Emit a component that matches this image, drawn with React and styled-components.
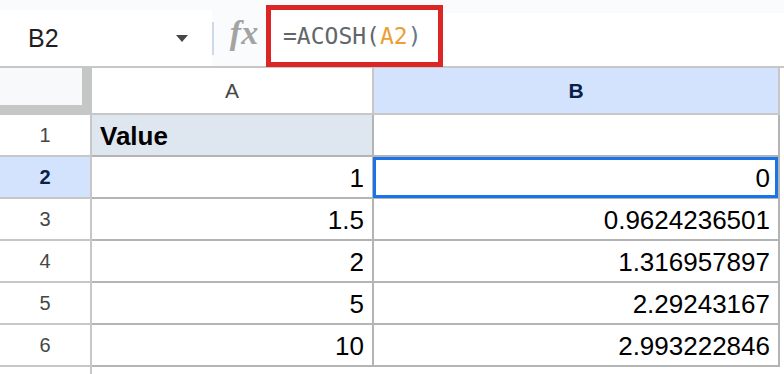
import React from 'react';
import styled, { createGlobalStyle } from 'styled-components';

const GlobalStyle = createGlobalStyle`
  body {
    margin: 0;
    background: #ffffff;
    font-family: "Liberation Sans", Arial, sans-serif;
  }
`;

const Page = styled.div`
  width: 784px;
  height: 374px;
  overflow: hidden;
`;

const TopBar = styled.div`
  display: flex;
  height: 66px;
  background: #f9fbfd;
  border-bottom: 2px solid #c7c7c7;
`;

const NameBox = styled.div`
  display: flex;
  align-items: center;
  width: 212px;
  margin-top: 10px;
  padding-left: 28px;
  box-sizing: border-box;
  background: #ffffff;
  font-size: 25px;
  color: #1f1f1f;
`;

const Caret = styled.span`
  margin-left: auto;
  margin-right: 24px;
  width: 0;
  height: 0;
  border-left: 6px solid transparent;
  border-right: 6px solid transparent;
  border-top: 7px solid #444746;
`;

const Divider = styled.div`
  width: 2px;
  height: 33px;
  margin-top: 22px;
  background: #cdd9e8;
`;

const FxBox = styled.div`
  display: flex;
  align-items: center;
  justify-content: center;
  width: 52px;
  padding-left: 8px;
  box-sizing: border-box;
  font-family: "Liberation Serif", serif;
  font-style: italic;
  font-weight: bold;
  font-size: 34px;
  color: #a3a3a3;
`;

const FormulaInput = styled.div`
  flex: 1;
  display: flex;
  margin-top: 13px;
  background: #ffffff;
`;

const Highlight = styled.div`
  position: relative;
  z-index: 2;
  display: flex;
  align-items: center;
  width: 177px;
  height: 62px;
  margin-top: -8px;
  padding-left: 12px;
  box-sizing: border-box;
  border: 5px solid #dc2626;
  background: #ffffff;
  font-family: "DejaVu Sans Mono", monospace;
  font-size: 23px;
  white-space: nowrap;
`;

const Token = styled.span`
  color: ${(p) => p.$color || '#62666b'};
`;

const Sheet = styled.div`
  display: grid;
  grid-template-columns: 92px 282px 406px;
  grid-template-rows: 47px repeat(6, 42px) 10px;
`;

const Cell = styled.div`
  box-sizing: border-box;
  border-right: 2px solid #b4b4b4;
  border-bottom: 2px solid #b4b4b4;
  display: flex;
  align-items: flex-end;
  justify-content: ${(p) => (p.$left ? 'flex-start' : 'flex-end')};
  padding: 0 8px 4px 8px;
  font-size: 26px;
  line-height: 30px;
  color: #000000;
  font-weight: ${(p) => (p.$bold ? 'bold' : 'normal')};
  background: ${(p) => p.$bg || '#ffffff'};
  position: relative;

  ${(p) =>
    p.$selected &&
    `
    &::after {
      content: '';
      position: absolute;
      top: 0;
      left: -1px;
      right: 0;
      bottom: -1px;
      border: 3px solid #1a73e8;
    }
  `}
`;

const Corner = styled.div`
  box-sizing: border-box;
  background: #f8f9fa;
  border-right: 10px solid #c4c7c5;
  border-bottom: 10px solid #c4c7c5;
`;

const ColHead = styled.div`
  box-sizing: border-box;
  display: flex;
  align-items: center;
  justify-content: center;
  border-right: 2px solid #c7c7c7;
  border-bottom: 2px solid #c7c7c7;
  font-size: 21px;
  color: ${(p) => (p.$active ? '#0b1f4b' : '#444746')};
  font-weight: ${(p) => (p.$active ? 'bold' : 'normal')};
  background: ${(p) => (p.$active ? '#d3e3fd' : '#ffffff')};
`;

const RowHead = styled.div`
  box-sizing: border-box;
  display: flex;
  align-items: center;
  justify-content: center;
  border-right: 2px solid #c7c7c7;
  border-bottom: ${(p) => (p.$last ? 'none' : '2px solid #c7c7c7')};
  font-size: 20px;
  color: ${(p) => (p.$active ? '#0b1f4b' : '#444746')};
  font-weight: ${(p) => (p.$active ? 'bold' : 'normal')};
  background: ${(p) => (p.$active ? '#d3e3fd' : '#ffffff')};
`;

const rows = [
  { a: '1', b: '0' },
  { a: '1.5', b: '0.9624236501' },
  { a: '2', b: '1.316957897' },
  { a: '5', b: '2.29243167' },
  { a: '10', b: '2.993222846' },
];

export default function App() {
  return (
    <Page>
      <GlobalStyle />
      <TopBar>
        <NameBox>
          B2
          <Caret />
        </NameBox>
        <Divider />
        <FxBox>fx</FxBox>
        <FormulaInput>
          <Highlight>
            <Token>=ACOSH(</Token>
            <Token $color="#eb9f35">A2</Token>
            <Token $color="#66778c">)</Token>
          </Highlight>
        </FormulaInput>
      </TopBar>
      <Sheet>
        <Corner />
        <ColHead>A</ColHead>
        <ColHead $active>B</ColHead>

        <RowHead>1</RowHead>
        <Cell $left $bold $bg="#dee6ef">Value</Cell>
        <Cell />

        {rows.map((r, i) => (
          <React.Fragment key={i}>
            <RowHead $active={i === 0}>{i + 2}</RowHead>
            <Cell>{r.a}</Cell>
            <Cell $selected={i === 0}>{r.b}</Cell>
          </React.Fragment>
        ))}

        <RowHead $last />
      </Sheet>
    </Page>
  );
}
